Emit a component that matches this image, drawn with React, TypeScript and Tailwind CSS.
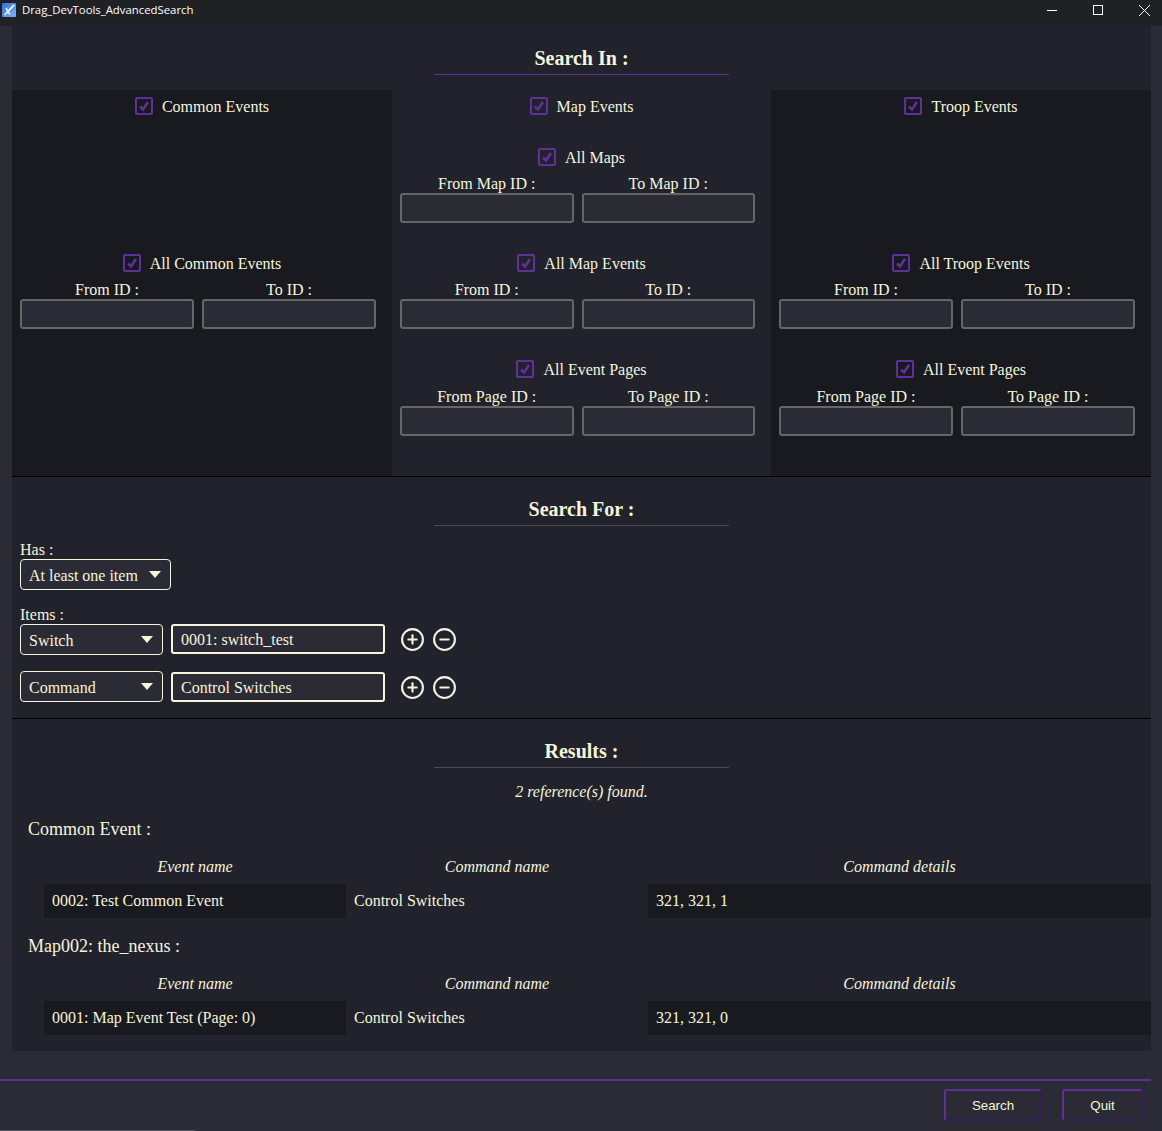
import { CircleMinus, CirclePlus } from "lucide-react";

const cream = "text-[#f5f5dc]";

function Check({ label }: { label: string }) {
  return (
    <div className="-mr-2 flex h-[22px] items-center justify-center gap-[9px]">
      <span className="flex size-[18px] items-center justify-center rounded-[2px] border-2 border-[#5f3097]">
        <svg viewBox="0 0 14 14" className="size-[14px]" fill="none" stroke="#5f3097" strokeWidth="2.6">
          <path d="M3 7.5 6 10.5 11 3" />
        </svg>
      </span>
      <span className="pt-[2px]">{label}</span>
    </div>
  );
}

function RangeInput() {
  return <input readOnly className="h-[30px] w-full rounded-[3px] border-2 border-[#666666] bg-[#2b2b36] outline-none" />;
}

function RangeBlock({ title, from, to, shifted }: { title: string; from: string; to: string; shifted?: boolean }) {
  const labelClass = shifted ? "h-[26px] pt-[8px] text-center leading-[18px]" : "h-[25px] pt-[7px] text-center leading-[18px]";
  return (
    <div className="h-[77px]">
      <Check label={title} />
      <div className="grid grid-cols-2 gap-x-2">
        <div className={labelClass}>{from}</div>
        <div className={labelClass}>{to}</div>
        <RangeInput />
        <RangeInput />
      </div>
    </div>
  );
}

function SearchColumn({ title, dark, children }: { title: string; dark?: boolean; children: React.ReactNode }) {
  return (
    <div className={`flex h-[386px] flex-col pt-[5px] pr-4 pl-2 ${dark ? "bg-[#191a1f]" : ""}`}>
      <Check label={title} />
      <div className="mt-[29px] flex flex-col gap-[29px]">{children}</div>
    </div>
  );
}

function Heading({ title, line }: { title: string; line: string }) {
  return (
    <div className="flex flex-col items-center">
      <h2 className="text-[20px] leading-[23px] font-bold">{title}</h2>
      <div className={`mt-[4px] h-px w-[295px] ${line}`} />
    </div>
  );
}

function Arrow() {
  return (
    <svg viewBox="0 0 12 7" className="h-[7px] w-[12px]" fill="#f5f5dc">
      <path d="M0 0h12L6 7z" />
    </svg>
  );
}

function ItemRow({ kind, value, top }: { kind: string; value: string; top: string }) {
  return (
    <div className={`flex ${top}`}>
      <div className="flex h-[31px] w-[143px] items-center justify-between rounded-[4px] border border-[#f5f5dc] bg-[#2b2b36] pr-[9px] pl-2">
        <span className="pt-[2px]">{kind}</span>
        <Arrow />
      </div>
      <input
        readOnly
        value={value}
        className="ml-2 h-[30px] w-[214px] rounded-[3px] border-2 border-[#f5f5dc] bg-[#2b2b36] px-2 pt-px outline-none"
      />
      <div className="flex h-[30px] items-center">
        <CirclePlus className="ml-[15px] size-[25px]" strokeWidth={2} />
        <CircleMinus className="ml-[7px] size-[25px]" strokeWidth={2} />
      </div>
    </div>
  );
}

function ResultTable({ title, event, details, top }: { title: string; event: string; details: string; top: string }) {
  return (
    <div className={`pl-4 ${top}`}>
      <div className="text-[18px] leading-[21px]">{title}</div>
      <div className="mt-[18px] ml-4 grid grid-cols-[302px_302px_1fr] text-center leading-[18px] italic">
        <div>Event name</div>
        <div>Command name</div>
        <div>Command details</div>
      </div>
      <div className="mt-2 ml-4 grid h-[34px] grid-cols-[302px_302px_1fr] items-center">
        <div className="flex h-full items-center bg-[#191a1f] px-2">{event}</div>
        <div className="px-2">Control Switches</div>
        <div className="flex h-full items-center bg-[#191a1f] px-2">{details}</div>
      </div>
    </div>
  );
}

export default function App() {
  return (
    <div className={`flex h-[1131px] flex-col bg-[#2b2b36] font-['Liberation_Serif',serif] text-[16px] ${cream}`}>
      <div className="flex h-[26px] items-center bg-[#202125] pb-[6px] pl-[2px] text-white">
        <svg viewBox="0 0 14 14" className="size-[14px]">
          <defs>
            <linearGradient id="logo" x1="0" y1="0" x2="1" y2="1">
              <stop offset="0" stopColor="#2f6fd8" />
              <stop offset="1" stopColor="#7fb4f2" />
            </linearGradient>
          </defs>
          <rect width="14" height="14" rx="1" fill="url(#logo)" />
          <path d="M12 2 4 10.5" stroke="#fff" strokeWidth="1.8" />
          <path d="M4 5 8 11.5M2.5 12 5 9.5" stroke="#e4f0ff" strokeWidth="1.5" fill="none" />
        </svg>
        <span className="ml-[6px] font-['Open_Sans',sans-serif] text-[11.35px]">Drag_DevTools_AdvancedSearch</span>
        <div className="ml-auto flex items-center">
          <div className="h-px w-[10px] bg-white" />
          <div className="ml-[36px] size-[10px] border border-white" />
          <svg viewBox="0 0 11 11" className="mr-[12px] ml-[36px] size-[11px]" stroke="#fff" strokeWidth="1">
            <path d="M0 0 11 11M11 0 0 11" />
          </svg>
        </div>
      </div>

      <div className="mr-[11px] ml-3 flex h-[1025px] flex-col bg-[#21222c]">
        <section className="h-[451px] border-b border-black">
          <div className="h-[64px] pt-[21px]">
            <Heading title="Search In :" line="bg-[#5f3097]" />
          </div>
          <div className="grid grid-cols-[380px_379px_380px]">
            <SearchColumn title="Common Events" dark>
              <div className="h-[77px]" />
              <RangeBlock title="All Common Events" from="From ID :" to="To ID :" />
            </SearchColumn>
            <SearchColumn title="Map Events">
              <RangeBlock title="All Maps" from="From Map ID :" to="To Map ID :" />
              <RangeBlock title="All Map Events" from="From ID :" to="To ID :" />
              <RangeBlock title="All Event Pages" from="From Page ID :" to="To Page ID :" shifted />
            </SearchColumn>
            <SearchColumn title="Troop Events" dark>
              <div className="h-[77px]" />
              <RangeBlock title="All Troop Events" from="From ID :" to="To ID :" />
              <RangeBlock title="All Event Pages" from="From Page ID :" to="To Page ID :" shifted />
            </SearchColumn>
          </div>
        </section>

        <section className="h-[242px] border-b border-black px-2 pt-[21px]">
          <Heading title="Search For :" line="bg-[#4a4b55]" />
          <div className="mt-[15px] leading-[18px]">Has :</div>
          <div className="flex h-[31px] w-[151px] items-center justify-between rounded-[4px] border border-[#f5f5dc] bg-[#2b2b36] pr-[9px] pl-2">
            <span className="pt-[2px]">At least one item</span>
            <Arrow />
          </div>
          <div className="mt-4 leading-[18px]">Items :</div>
          <ItemRow kind="Switch" value="0001: switch_test" top="items-start" />
          <ItemRow kind="Command" value="Control Switches" top="mt-4 items-end" />
        </section>

        <section className="pt-[21px]">
          <Heading title="Results :" line="bg-[#4a4b55]" />
          <div className="mt-[15px] text-center leading-[18px] italic">2 reference(s) found.</div>
          <ResultTable title="Common Event :" event="0002: Test Common Event" details="321, 321, 1" top="mt-[18px]" />
          <ResultTable title="Map002: the_nexus :" event="0001: Map Event Test (Page: 0)" details="321, 321, 0" top="mt-[18px]" />
        </section>
      </div>

      <div className="mt-7 mr-[11px] h-[2px] bg-[#5f3097]" />
      <div className="mt-2 mr-[19px] flex justify-end gap-5 font-['Liberation_Sans',sans-serif] text-[13.33px]">
        <button className="h-[32px] w-[98px] rounded-[3px] border-2 border-t-[#5f3097] border-r-[#351c59] border-b-[#351c59] border-l-[#5f3097] pt-px">
          Search
        </button>
        <button className="h-[32px] w-[81px] rounded-[3px] border-2 border-t-[#5f3097] border-r-[#351c59] border-b-[#351c59] border-l-[#5f3097] pt-px">
          Quit
        </button>
      </div>
      <div className="mt-auto h-px w-[195px] bg-[#55565e]" />
    </div>
  );
}
